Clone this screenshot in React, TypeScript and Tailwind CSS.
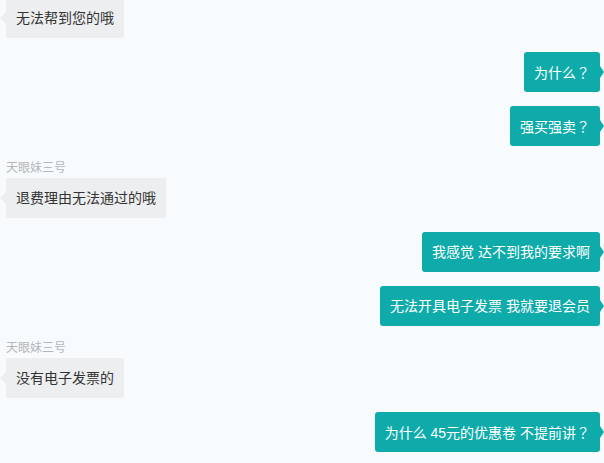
import React from "react";

type Msg = { side: "left" | "right"; text: string; name?: string };

const msgs: Msg[] = [
  { side: "left", text: "无法帮到您的哦" },
  { side: "right", text: "为什么？" },
  { side: "right", text: "强买强卖？" },
  { side: "left", text: "退费理由无法通过的哦", name: "天眼妹三号" },
  { side: "right", text: "我感觉 达不到我的要求啊" },
  { side: "right", text: "无法开具电子发票 我就要退会员" },
  { side: "left", text: "没有电子发票的", name: "天眼妹三号" },
  { side: "right", text: "为什么 45元的优惠卷 不提前讲？" },
];

function Txt({ t }: { t: string }) {
  const parts = t.split("？");
  return (
    <span className="whitespace-nowrap">
      {parts.map((p, i) => (
        <React.Fragment key={i}>
          {p}
          {i < parts.length - 1 && (
            <span style={{ fontFamily: '"Noto Sans CJK TC", sans-serif' }}>？</span>
          )}
        </React.Fragment>
      ))}
    </span>
  );
}

export default function App() {
  return (
    <div
      className="h-[463px] w-[604px] overflow-hidden bg-[#f7fbfe] pl-[6px] pr-[4px]"
      style={{ fontFamily: '"Liberation Sans", "Noto Sans CJK SC", sans-serif' }}
    >
      <div className="-mt-[2px] flex flex-col gap-[14px]">
        {msgs.map((m, i) =>
          m.side === "left" ? (
            <div key={i} className="flex flex-col items-start">
              {m.name && (
                <div className="mb-[2px] text-[12px] leading-[16px] text-[#b4b7b9]">{m.name}</div>
              )}
              <div className="relative flex h-[40px] items-center rounded-[2px] bg-[#eceeef] px-[10px] text-[14px] leading-[20px] text-[#333333]">
                <span className="absolute left-[-6px] top-[14px] h-0 w-0 border-y-[6px] border-r-[6px] border-y-transparent border-r-[#eceeef]" />
                <Txt t={m.text} />
              </div>
            </div>
          ) : (
            <div key={i} className="flex justify-end">
              <div className="relative flex h-[40px] items-center rounded-[3px] bg-[#0fabab] px-[10px] text-[14px] leading-[20px] text-white">
                <Txt t={m.text} />
                <span className="absolute right-[-4px] top-[14px] h-0 w-0 border-y-[6px] border-l-[4px] border-y-transparent border-l-[#0fabab]" />
              </div>
            </div>
          )
        )}
      </div>
    </div>
  );
}
